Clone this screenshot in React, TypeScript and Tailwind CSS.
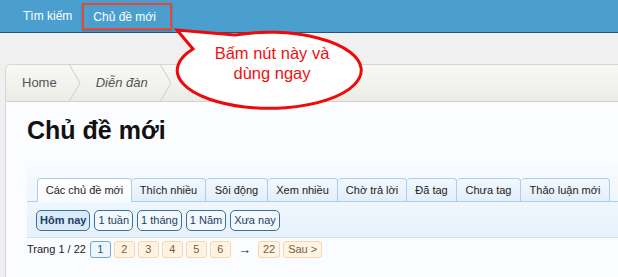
import React from 'react';

const tabs = [
  { label: 'Các chủ đề mới', w: 'w-[95px]', active: true },
  { label: 'Thích nhiều', w: 'w-[74px]' },
  { label: 'Sôi động', w: 'w-[62px]' },
  { label: 'Xem nhiều', w: 'w-[70px]' },
  { label: 'Chờ trả lời', w: 'w-[69px]' },
  { label: 'Đã tag', w: 'w-[50px]' },
  { label: 'Chưa tag', w: 'w-[64px]' },
  { label: 'Thảo luận mới', w: 'w-[89px]' },
];

const filters = ['Hôm nay', '1 tuần', '1 tháng', '1 Năm', 'Xưa nay'];

const Chevron = () => (
  <svg width="12" height="36" viewBox="0 0 12 36" className="shrink-0">
    <polyline points="0.5,0 11,18 0.5,36" fill="none" stroke="#cdcdc8" strokeWidth="1" />
  </svg>
);

const PageBtn = ({ children, current }: { children: React.ReactNode; current?: boolean }) => (
  <span
    className={
      current
        ? 'h-[17px] min-w-[21px] px-[4px] flex items-center justify-center rounded-[3px] border border-[#6fa6d6] bg-[#eef6fd] text-[#2b5479]'
        : 'h-[17px] min-w-[21px] px-[4px] flex items-center justify-center rounded-[3px] border border-[#f7d6ab] bg-[#fff3e1] text-[#7d5d3b]'
    }
  >
    {children}
  </span>
);

export default function App() {
  return (
    <div className="relative w-[618px] h-[277px] overflow-hidden bg-[#f0f0f0] font-['Liberation_Sans',Arial,sans-serif]">
      {/* Top nav */}
      <nav className="h-[33px] bg-[#4a9fcf] border-b border-[#23557a] flex items-center pl-[12px] text-white text-[12px]">
        <span className="px-[11px]">Tìm kiếm</span>
        <span className="h-[27px] flex items-center pl-[9px] pr-[14px] border-2 border-[#e9463a] ml-[-1px] mt-[1px] shadow-[0_1px_2px_rgba(0,0,0,0.25)]">
          Chủ đề mới
        </span>
      </nav>

      {/* Card */}
      <div className="mt-[31px] ml-[5px] border-l border-t border-[#d6d6d6] rounded-tl-[6px] overflow-hidden bg-[#fbfcff] h-[220px]">
        <div className="h-[37px] border-b border-[#d2d2d0] bg-gradient-to-b from-[#f8f8f5] to-[#ecece7] flex items-center text-[13px] text-[#555]">
          <span className="ml-[16px] mr-[12px]">Home</span>
          <Chevron />
          <span className="ml-[15px] mr-[12px] italic">Diễn đàn</span>
          <Chevron />
        </div>

        <div className="pl-[21px]">
          <h1 className="mt-[14px] text-[25px] leading-[28px] font-bold text-[#111]">Chủ đề mới</h1>

          <div className="mt-[19px] pt-[15px] pb-[6px] bg-gradient-to-b from-[#f8fbfe] to-[#e7f2fc] border-b border-[#cde3f3] w-[700px]">
            <div className="flex pl-[10px] border-b border-[#a9cfea]">
              {tabs.map((t) => (
                <div
                  key={t.label}
                  className={
                    t.active
                      ? `${t.w} h-[24px] mb-[-1px] flex items-center justify-center rounded-t-[4px] border border-b-0 border-[#a9cfea] bg-gradient-to-b from-[#ffffff] to-[#f9fcff] text-[11px] text-[#222]`
                      : `${t.w} h-[23px] flex items-center justify-center rounded-t-[4px] border border-b-0 border-l-0 border-[#a9cfea] bg-gradient-to-b from-[#f2f8fe] to-[#e2effb] text-[11px] text-[#222]`
                  }
                >
                  {t.label}
                </div>
              ))}
            </div>
            <div className="flex gap-[4px] pl-[9px] pt-[8px]">
              {filters.map((f, i) => (
                <span
                  key={f}
                  className={
                    i === 0
                      ? 'h-[21px] px-[3px] flex items-center rounded-[5px] border border-[#3d6f98] bg-[#d9eaf8] text-[11px] font-bold text-[#1d3f5f]'
                      : 'h-[21px] px-[3px] flex items-center rounded-[5px] border border-[#3d6f98] bg-[#f1f8fe] text-[11px] text-[#1d3f5f]'
                  }
                >
                  {f}
                </span>
              ))}
            </div>
          </div>

          <div className="mt-[3px] flex items-center gap-[3px] text-[11px] text-[#222]">
            <span className="mr-[1px]">Trang 1 / 22</span>
            <PageBtn current>1</PageBtn>
            <PageBtn>2</PageBtn>
            <PageBtn>3</PageBtn>
            <PageBtn>4</PageBtn>
            <PageBtn>5</PageBtn>
            <PageBtn>6</PageBtn>
            <span className="mx-[4px] text-[13px] font-bold leading-none">→</span>
            <PageBtn>22</PageBtn>
            <PageBtn>Sau &gt;</PageBtn>
          </div>
        </div>
      </div>

      {/* Callout bubble */}
      <div className="absolute left-0 top-0 w-[618px] h-[277px] pointer-events-none">
        <svg width="618" height="277" className="absolute left-0 top-0">
          <path
            d="M 235 35 L 177 30 L 193 49 A 92 38 0 1 0 235 35 Z"
            fill="#ffffff"
            stroke="#ee0a0a"
            strokeWidth="3"
            strokeLinejoin="miter"
          />
        </svg>
        <div className="absolute left-[180px] top-[43px] w-[184px] text-center text-[16.5px] leading-[20px] text-[#ee1111]">
          Bấm nút này và
          <br />
          dùng ngay
        </div>
      </div>
    </div>
  );
}
